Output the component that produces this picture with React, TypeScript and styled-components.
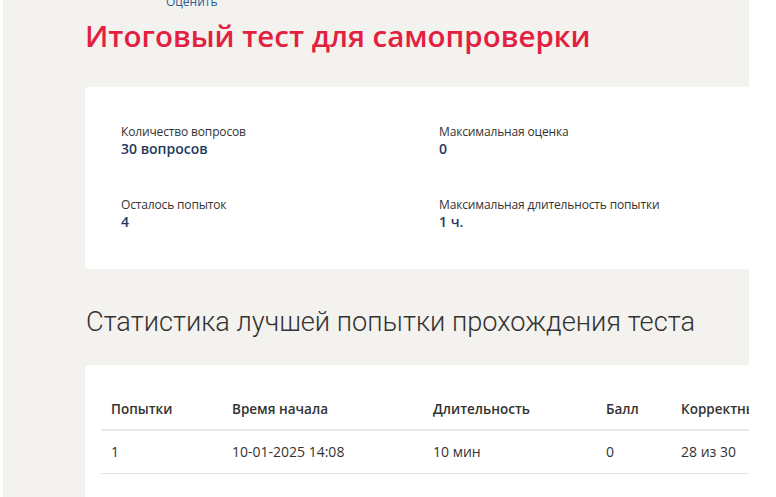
import React from "react";
import styled, { createGlobalStyle } from "styled-components";

const Global = createGlobalStyle`
  html, body { margin: 0; padding: 0; background: #ffffff; }
  body { font-family: "Open Sans", "Liberation Sans", sans-serif; overflow: hidden; }
  * { box-sizing: border-box; }
`;

const Page = styled.div`
  width: 776px;
  height: 497px;
  display: flex;
  background: #ffffff;
`;

const Main = styled.main`
  margin-left: 3px;
  width: 746px;
  height: 497px;
  background: #f3f2ef;
  overflow: hidden;
  padding: 0 0 0 82px;
  display: flex;
  flex-direction: column;
`;

const RateLink = styled.a`
  display: block;
  margin: -6px 0 0 81px;
  font-size: 12px;
  line-height: 16px;
  color: #2b5a94;
  text-decoration: none;
`;

const Title = styled.h1`
  margin: 6px 0 0 0;
  font-family: "Open Sans", sans-serif;
  font-weight: 600;
  font-size: 29.5px;
  line-height: 40px;
  color: #e3203f;
  white-space: nowrap;
`;

const Card = styled.section<{ $top: number }>`
  margin-top: ${(p) => p.$top}px;
  width: 720px;
  flex-shrink: 0;
  background: #ffffff;
  border-radius: 4px;
`;

const InfoGrid = styled.div`
  display: grid;
  grid-template-columns: 318px 318px;
  row-gap: 39px;
  padding: 36px 36px 39px 36px;
`;

const InfoItem = styled.div`
  display: flex;
  flex-direction: column;
`;

const Label = styled.span`
  font-size: 12px;
  line-height: 17px;
  letter-spacing: -0.15px;
  color: #333333;
`;

const Value = styled.span`
  font-size: 14px;
  line-height: 17px;
  font-weight: 600;
  color: #1f3a60;
`;

const SectionTitle = styled.h2`
  margin: 35px 0 0 1px;
  font-family: "Roboto", sans-serif;
  font-weight: 300;
  font-size: 27.2px;
  line-height: 36px;
  color: #333333;
  white-space: nowrap;
`;

const TableWrap = styled.div`
  padding: 25px 0 40px 16px;
`;

const Table = styled.table`
  border-collapse: collapse;
  table-layout: fixed;
  width: 800px;
  color: #333333;
`;

const Th = styled.th<{ $w?: number }>`
  text-align: left;
  font-size: 13.5px;
  font-weight: 600;
  padding: 11px 10px 11px 10px;
  line-height: 17px;
  border-bottom: 2px solid #e9e9e9;
  white-space: nowrap;
  width: ${(p) => (p.$w ? `${p.$w}px` : "auto")};
`;

const Td = styled.td`
  font-size: 14px;
  padding: 12px 10px 12px 10px;
  line-height: 18px;
  border-bottom: 1px solid #e4e4e4;
  white-space: nowrap;
`;

const info = [
  { label: "Количество вопросов", value: "30 вопросов" },
  { label: "Максимальная оценка", value: "0" },
  { label: "Осталось попыток", value: "4" },
  { label: "Максимальная длительность попытки", value: "1 ч." },
];

const cols = [
  { title: "Попытки", w: 121 },
  { title: "Время начала", w: 201 },
  { title: "Длительность", w: 173 },
  { title: "Балл", w: 75 },
  { title: "Корректные ответы" },
];

const row = ["1", "10-01-2025 14:08", "10 мин", "0", "28 из 30"];

export default function App() {
  return (
    <Page>
      <Global />
      <Main>
        <RateLink href="#">Оценить</RateLink>
        <Title>Итоговый тест для самопроверки</Title>
        <Card $top={31}>
          <InfoGrid>
            {info.map((i) => (
              <InfoItem key={i.label}>
                <Label>{i.label}</Label>
                <Value>{i.value}</Value>
              </InfoItem>
            ))}
          </InfoGrid>
        </Card>
        <SectionTitle>Статистика лучшей попытки прохождения теста</SectionTitle>
        <Card $top={25}>
          <TableWrap>
            <Table>
              <thead>
                <tr>
                  {cols.map((c) => (
                    <Th key={c.title} $w={c.w}>
                      {c.title}
                    </Th>
                  ))}
                </tr>
              </thead>
              <tbody>
                <tr>
                  {row.map((v, i) => (
                    <Td key={i}>{v}</Td>
                  ))}
                </tr>
              </tbody>
            </Table>
          </TableWrap>
        </Card>
      </Main>
    </Page>
  );
}
